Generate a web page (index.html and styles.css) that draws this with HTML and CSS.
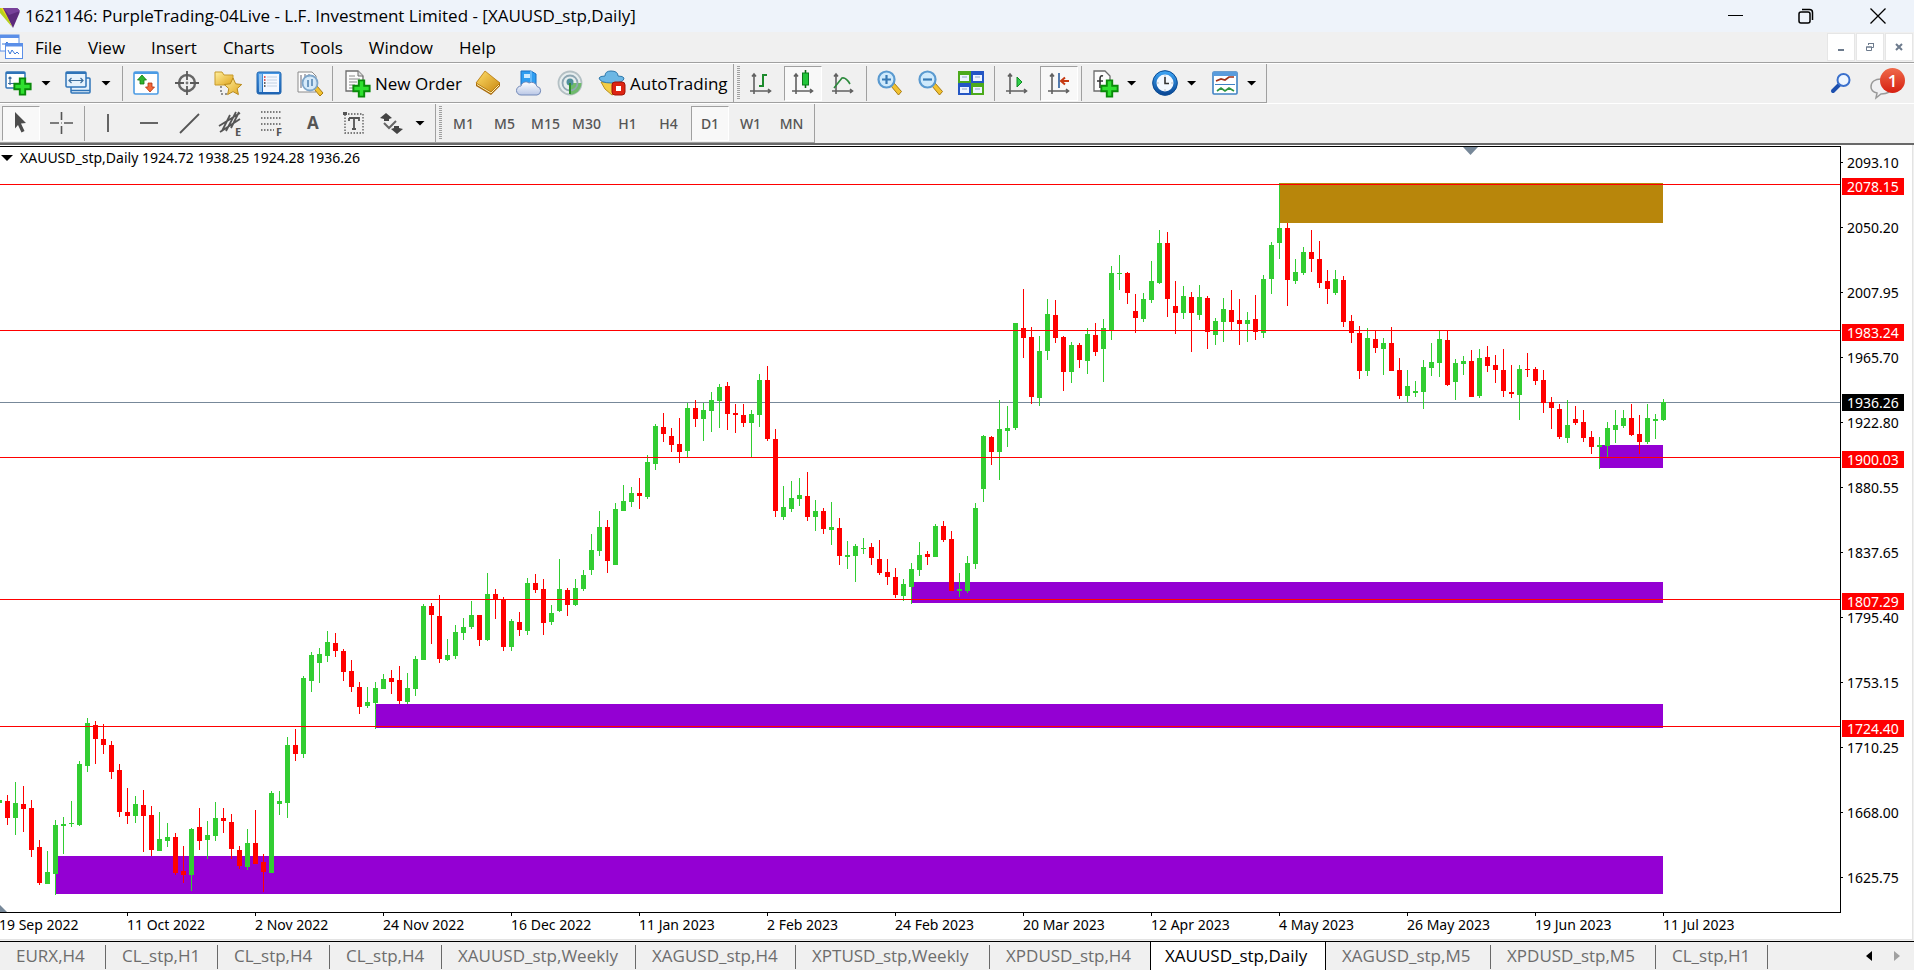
FILE: index.html
```html
<!DOCTYPE html>
<html lang="en">
<head>
<meta charset="utf-8">
<title>1621146: PurpleTrading-04Live - L.F. Investment Limited - [XAUUSD_stp,Daily]</title>
<link rel="stylesheet" href="styles.css">
</head>
<body>
<svg class="defs" aria-hidden="true">
  <defs>
    <linearGradient id="gBlue" x1="0" y1="0" x2="0" y2="1"><stop offset="0" stop-color="#4a9be8"/><stop offset="1" stop-color="#1c62b4"/></linearGradient>
    <linearGradient id="gRing" x1="0" y1="0" x2="0" y2="1"><stop offset="0" stop-color="#3aa0f0"/><stop offset="1" stop-color="#0b4a98"/></linearGradient>
    <linearGradient id="gGold" x1="0" y1="0" x2="1" y2="1"><stop offset="0" stop-color="#fff0a0"/><stop offset="1" stop-color="#e0a51c"/></linearGradient>
    <linearGradient id="gBar" x1="0" y1="0" x2="1" y2="1"><stop offset="0" stop-color="#ffdf6a"/><stop offset="1" stop-color="#c98710"/></linearGradient>
    <linearGradient id="gCloud" x1="0" y1="0" x2="0" y2="1"><stop offset="0" stop-color="#ffffff"/><stop offset="1" stop-color="#b9c7e6"/></linearGradient>
    <symbol id="plus" viewBox="0 0 14 14"><path d="M5 1h4v4h4v4H9v4H5V9H1V5h4z" fill="#2fe02f" stroke="#0a8a0a" stroke-width="1.4"/></symbol>
    <symbol id="axes" viewBox="0 0 26 26"><path d="M6 24V4M2 21h20M4 6.500 6 4l2 2.500M20 19l2.500 2-2.500 2" fill="none" stroke="#606060" stroke-width="1.600"/></symbol>
    <symbol id="lens" viewBox="0 0 26 26"><path d="M15 16l3-3 7.500 8.500-3 3.500z" fill="#f2c230" stroke="#a87a10"/><circle cx="10.500" cy="9.500" r="8" fill="#cfeafc" stroke="#5a9ad0" stroke-width="2.200"/></symbol>
  </defs>
</svg>

<header class="titlebar">
  <svg class="logo" viewBox="0 0 20 24" aria-hidden="true"><path d="M0 4h4l8 19L0 9z" fill="#b6d21c"/><path d="M1 4h3l9 19z" fill="#f0d820"/><path d="M3 4h14q4 2 2 6l-6 14z" fill="#5c2a7c"/><path d="M3 4h14l3 3-11 4z" fill="#77409a"/></svg>
  <h1 class="title">1621146: PurpleTrading-04Live - L.F. Investment Limited - [XAUUSD_stp,Daily]</h1>
  <div class="wincontrols">
    <button class="winbtn" aria-label="Minimize"><svg width="16" height="16"><path d="M0 7.500h15" stroke="#000"/></svg></button>
    <button class="winbtn" aria-label="Restore"><svg width="16" height="16" fill="none" stroke="#000" stroke-width="1.500"><rect x="1" y="4" width="11" height="11" rx="2"/><path d="M4 1.500h7.500q3 0 3 3V12"/></svg></button>
    <button class="winbtn" aria-label="Close"><svg width="16" height="16"><path d="M.5.5l15 15M15.500.5l-15 15" stroke="#000" stroke-width="1.300"/></svg></button>
  </div>
</header>

<nav class="menubar">
  <svg class="menulogo" viewBox="0 0 24 26" aria-hidden="true"><rect x="0" y="1" width="19" height="16" fill="#fff" stroke="#5b8fe8"/><path d="M0 2.500h19" stroke="#5b8fe8" stroke-width="3"/><path d="M2 10h3l2-2 3 4 3-2" fill="none" stroke="#3a78d8"/><rect x="5.500" y="9.500" width="17" height="15" fill="#fff" stroke="#5b8fe8"/><path d="M5 11h18" stroke="#5b8fe8" stroke-width="3"/><path d="M8 16l2 4 2-4 3 4 2-2 2 2" fill="none" stroke="#3a78d8"/></svg>
  <button>File</button><button>View</button><button>Insert</button><button>Charts</button><button>Tools</button><button>Window</button><button>Help</button>
  <div class="mdi">
    <button class="mdibtn" aria-label="Minimize chart"><svg width="10" height="10"><path d="M2 7h6v2H2z" fill="#6d7b8d"/></svg></button>
    <button class="mdibtn" aria-label="Restore chart"><svg width="10" height="10" fill="none" stroke="#6d7b8d"><path d="M3.500 3V1.500h5v4H7M3 1.500h6" /><path d="M1.500 5h5v3.500h-5zM1 5h6"/></svg></button>
    <button class="mdibtn" aria-label="Close chart"><svg width="10" height="10"><path d="M2 2l6 6M8 2 2 8" stroke="#6d7b8d" stroke-width="2"/></svg></button>
  </div>
</nav>

<section class="tools">
  <div class="row">
    <div class="bar bar-main">
      <button class="split" aria-label="New chart"><svg class="ico" viewBox="0 0 26 26"><rect x="1" y="2" width="19" height="16" rx="1" fill="#fff" stroke="#2f74b8" stroke-width="1.500"/><path d="M1 3h19" stroke="#2f74b8" stroke-width="2"/><path d="M5 7v8M3.500 8.500 5 7l1.500 1.500M3 13.500h7" fill="none" stroke="#3d6e9c" stroke-width="1.200"/><use href="#plus" x="8" y="7" width="19" height="19"/></svg><i class="caret"></i></button>
      <button class="split" aria-label="Profiles"><svg class="ico" viewBox="0 0 26 26"><rect x="6" y="8" width="19" height="15" rx="1" fill="#e6f2fc" stroke="#2f74b8" stroke-width="1.500"/><path d="M6 20.500h19" stroke="#2f74b8" stroke-width="1.500"/><rect x="1" y="2" width="20" height="15" rx="1" fill="#e6f2fc" stroke="#2f74b8" stroke-width="1.500"/><path d="M1 3h20" stroke="#2f74b8" stroke-width="2"/><path d="M4 10.500h14M6.500 8 4 10.500 6.500 13M15.500 8l2.500 2.500-2.500 2.500" fill="none" stroke="#3d6e9c" stroke-width="1.200"/></svg><i class="caret"></i></button>
      <span class="sep"></span>
      <button class="cell" aria-label="Market watch"><svg class="ico" viewBox="0 0 26 26"><rect x="1" y="2" width="24" height="22" rx="1.500" fill="#fff" stroke="#4b9be4" stroke-width="1.600"/><path d="M1 3h24" stroke="#4b9be4" stroke-width="2"/><path d="M9 5l4.500 5H11v4H7v-4H4.500z" fill="#2fb52f" stroke="#147a14" stroke-width=".8"/><path d="M17 22l4.500-5H19v-4h-4v4h-2.500z" fill="#f4683a" stroke="#b03410" stroke-width=".8"/></svg></button>
      <button class="cell" aria-label="Data window"><svg class="ico" viewBox="0 0 26 26"><circle cx="13" cy="13" r="8" fill="none" stroke="#666" stroke-width="2.400"/><path d="M13 1v9M13 16v9M1 13h9M16 13h9" stroke="#5a5a5a" stroke-width="1.800"/><circle cx="13" cy="13" r="1.400" fill="#777"/></svg></button>
      <button class="cell" aria-label="Navigator"><svg class="ico" viewBox="0 0 26 26"><path d="M0 2h7l2 3h9v10H0z" fill="url(#gGold)" stroke="#c79a2a"/><path d="M6 16v8h6" fill="none" stroke="#333" stroke-dasharray="2 2"/><path d="M18 8l2.700 5.800 6 .7-4.500 4.100 1.200 6L18 21.600l-5.400 3 1.200-6-4.500-4.100 6-.7z" fill="url(#gGold)" stroke="#b98a1c"/></svg></button>
      <button class="cell" aria-label="Terminal"><svg class="ico" viewBox="0 0 26 26"><rect x="1" y="2" width="24" height="22" rx="2" fill="url(#gBlue)" stroke="#1e64ae"/><path d="M7 4h16v18H7z" fill="#f4f8ff"/><path d="M11 7h10M11 10h10M11 13h10M11 16h10" stroke="#b6c6dc" stroke-width=".8"/><path d="M3 4h3v18H3z" fill="#8fc2ee"/><path d="M8 7h1.500M8 10h1.500" stroke="#d22" stroke-width="1.500"/><path d="M8 13h1.500M8 16h1.500" stroke="#333" stroke-width="1.500"/></svg></button>
      <button class="cell" aria-label="Strategy tester"><svg class="ico" viewBox="0 0 26 26"><path d="M1 2h14l4 4v16H1z" fill="#fdfdfd" stroke="#8a8a8a"/><path d="M4 5v13M8 4v4M12 4v4" stroke="#667"/><path d="M17 19l3-3 6 7-3 3z" fill="#f2c230" stroke="#a87a10"/><circle cx="13" cy="13" r="7.500" fill="#d2e8fa" fill-opacity=".9" stroke="#7ea6ca" stroke-width="1.800"/><path d="M11 10v7M15 9v7" stroke="#4d80b0" stroke-width="1.500"/></svg></button>
      <span class="sep"></span>
      <button class="wide"><svg class="ico" viewBox="0 0 26 26"><path d="M2 1h12l5 5v15H2z" fill="#fcfcfc" stroke="#6c6c6c" stroke-width="1.300"/><path d="M14 1v5h5" fill="#ddd" stroke="#6c6c6c"/><path d="M5 6h6M5 9h11M5 12h8M5 15h6M5 18h5" stroke="#888"/><use href="#plus" x="8" y="9" width="19" height="19"/></svg>New Order</button>
      <button class="cell" aria-label="MetaEditor"><svg class="ico" viewBox="0 0 26 26"><path d="M10 2 25 13v3l-9 9L1 16v-3z" fill="#a8690c"/><path d="M10 1 25 13l-9 9L1 13z" fill="url(#gBar)" stroke="#b57a12" stroke-width=".8"/><path d="M2 14.500l14 8.500 8-8" fill="none" stroke="#fff2b0"/></svg></button>
      <button class="cell" aria-label="Cloud"><svg class="ico" viewBox="0 0 26 26"><path d="M5 1h10l5 3v11H5z" fill="#2f9df0" stroke="#1a70c4"/><path d="M8 4h6v4H8z" fill="#cdeaff"/><path d="M15 1v14" stroke="#9ad4ff"/><path d="M5 25a4.500 4.500 0 0 1 0-9 5 5 0 0 1 8-3 5.500 5.500 0 0 1 8 3.500 4.300 4.300 0 0 1 0 8.500z" fill="url(#gCloud)" stroke="#7289b8"/></svg></button>
      <button class="cell" aria-label="Signals"><svg class="ico" viewBox="0 0 26 26"><circle cx="13" cy="13" r="11.500" fill="#e6edee" stroke="#b4c0c4" stroke-width="1.800"/><path d="M13 13h11.500A11.500 11.500 0 0 1 13 24.500z" fill="#6fba6c"/><circle cx="13" cy="13" r="7.500" fill="none" stroke="#8ea6b2" stroke-width="1.800"/><circle cx="13" cy="12" r="3.500" fill="#4f8f9c"/><path d="M13 13v11" stroke="#2f8f2f" stroke-width="2"/></svg></button>
      <button class="wide"><svg class="ico" viewBox="0 0 26 26"><path d="M2 12h21l-5 10-5 3-7-6z" fill="#f3cd45" stroke="#b8901c"/><path d="M0 8q1-2 6-2 0-5 6-5 7 0 7 5 5 0 6 2 0 5-12 5T0 8z" fill="#6cb7e4" stroke="#2f79ac"/><rect x="13" y="12" width="13" height="13" rx="3" fill="#dd2412" stroke="#a01206"/><rect x="17" y="16" width="5" height="5" fill="#fff"/></svg>AutoTrading</button>
    </div>
    <div class="bar bar-charts">
      <span class="grip"></span>
      <button class="cell" aria-label="Bar chart"><svg class="ico" viewBox="0 0 26 26"><use href="#axes"/><path d="M15 4v13M15 5h4M11 16h4" fill="none" stroke="#1c8a2c" stroke-width="2"/></svg></button>
      <button class="cell on" aria-label="Candlesticks"><svg class="ico" viewBox="0 0 26 26"><use href="#axes"/><path d="M15.500 0v18" stroke="#0a6a14" stroke-width="1.600"/><rect x="12.500" y="3" width="6" height="12" fill="#22c63a" stroke="#0a7a1a"/></svg></button>
      <button class="cell" aria-label="Line chart"><svg class="ico" viewBox="0 0 26 26"><use href="#axes"/><path d="M4 18q4-5 8-10 4-1 8 6" fill="none" stroke="#2c8a3c" stroke-width="1.600"/></svg></button>
      <span class="sep"></span>
      <button class="cell" aria-label="Zoom in"><svg class="ico" viewBox="0 0 26 26"><use href="#lens"/><path d="M6 9.500h9M10.500 5v9" stroke="#3779b4" stroke-width="2.200"/></svg></button>
      <button class="cell" aria-label="Zoom out"><svg class="ico" viewBox="0 0 26 26"><use href="#lens"/><path d="M6 9.500h9" stroke="#3779b4" stroke-width="2.200"/></svg></button>
      <button class="cell" aria-label="Tile windows"><svg class="ico" viewBox="0 0 26 26"><path d="M0 1h13v12H0zM13 13h13v12H13z" fill="#4caa1c"/><path d="M13 1h13v12H13zM0 13h13v12H0z" fill="#2456c4"/><path d="M2 5h9v6H2zM15 5h9v6h-9zM2 17h9v6H2zM15 17h9v6h-9z" fill="#eef4ff"/><path d="M4 7h5M17 7h5M4 19h5M17 19h5" stroke="#8fa8c8"/></svg></button>
      <span class="sep"></span>
      <button class="cell" aria-label="Auto scroll"><svg class="ico" viewBox="0 0 26 26"><use href="#axes"/><path d="M13 7l5 5-5 5z" fill="#2fd04a" stroke="#0f8a22"/></svg></button>
      <button class="cell on" aria-label="Chart shift"><svg class="ico" viewBox="0 0 26 26"><use href="#axes"/><path d="M13 3v15" stroke="#2a5c9c" stroke-width="1.600"/><path d="M23 11h-7M19 7.500 15 11l4 3.500" fill="none" stroke="#c63a12" stroke-width="2"/></svg></button>
      <span class="sep"></span>
      <button class="split" aria-label="Indicators"><svg class="ico" viewBox="0 0 26 26"><path d="M2 1h11l5 5v15H2z" fill="#fcfcfc" stroke="#6c6c6c" stroke-width="1.300"/><path d="M11 6q-3-1-3 3v9M5 11h6" fill="none" stroke="#333" stroke-width="1.600"/><use href="#plus" x="8" y="9" width="19" height="19"/></svg><i class="caret"></i></button>
      <button class="split" aria-label="Periods"><svg class="ico" viewBox="0 0 26 26"><circle cx="13" cy="13" r="10.500" fill="#f2f8ff" stroke="url(#gRing)" stroke-width="4"/><circle cx="13" cy="13" r="12.300" fill="none" stroke="#0c4c94"/><path d="M13 7v6.500h4" fill="none" stroke="#333" stroke-width="1.600"/><path d="M13 5.500v1M13 19.500v1M5.500 13h1M19.500 13h1" stroke="#888"/></svg><i class="caret"></i></button>
      <button class="split" aria-label="Templates"><svg class="ico" viewBox="0 0 26 26"><rect x="1" y="2" width="24" height="22" rx="1" fill="#fff" stroke="#3f82c4" stroke-width="1.600"/><path d="M1 4h24" stroke="#5a9cdc" stroke-width="4"/><path d="M3 14.500h20" stroke="#3f82c4"/><path d="M4 11l5-2 4 1 4-3h5" fill="none" stroke="#a03018" stroke-width="1.700"/><path d="M5 21l4-3 4 3 4-3 5 3" fill="none" stroke="#2c9440" stroke-width="1.700"/></svg><i class="caret"></i></button>
    </div>
    <div class="right">
      <button class="plain" aria-label="Search"><svg width="22" height="24" viewBox="0 0 22 24"><path d="M3 19l6-6" stroke="#1c4fae" stroke-width="4" stroke-linecap="round"/><circle cx="13.500" cy="8" r="6" fill="#eef6ff" stroke="#3a70cc" stroke-width="2"/></svg></button>
      <button class="plain note" aria-label="Notifications"><svg width="28" height="28" viewBox="0 0 28 28"><path d="M11 7c6 0 10 3 10 8s-4 7-10 7l-5 4 1-5c-4-1-6-3-6-6 0-5 4-8 10-8z" fill="#f0f0f2" stroke="#999" stroke-width="1.500"/></svg><span class="badge">1</span></button>
    </div>
  </div>
  <div class="row">
    <div class="bar bar-line">
      <button class="cell on" aria-label="Cursor"><svg class="ico" viewBox="0 0 26 26"><path d="M7 2l11 11-5 .5 3.500 7.500-3 1.500L10 15l-3 3.500z" fill="#4c4c4c"/></svg></button>
      <button class="cell" aria-label="Crosshair"><svg class="ico" viewBox="0 0 26 26"><path d="M12.500 2v8M12.500 16v8M1 13h9M15 13h9" stroke="#555" stroke-width="1.600"/><path d="M12 12.500h1v1h-1z" fill="#555"/></svg></button>
      <span class="sep"></span>
      <button class="cell" aria-label="Vertical line"><svg class="ico" viewBox="0 0 26 26"><path d="M13 4v18" stroke="#555" stroke-width="1.800"/></svg></button>
      <button class="cell" aria-label="Horizontal line"><svg class="ico" viewBox="0 0 26 26"><path d="M4 13h18" stroke="#555" stroke-width="1.800"/></svg></button>
      <button class="cell" aria-label="Trendline"><svg class="ico" viewBox="0 0 26 26"><path d="M3 23 22 4" stroke="#555" stroke-width="1.800"/></svg></button>
      <button class="cell" aria-label="Equidistant channel"><svg class="ico" viewBox="0 0 26 26"><path d="M1 16 22 3M2 22 22 9M4 21 12 5M8 21l10-19M13 18l8-16" stroke="#555" stroke-width="1.800"/><text x="17" y="26" class="icotxt">E</text></svg></button>
      <button class="cell" aria-label="Fibonacci"><svg class="ico" viewBox="0 0 26 26"><path d="M2 2h21M2 8h21M2 14h21M2 20h13" stroke="#555" stroke-width="1.600" stroke-dasharray="1.500 1.500"/><text x="17" y="26" class="icotxt">F</text></svg></button>
      <button class="cell" aria-label="Text"><svg class="ico" viewBox="0 0 26 26"><text x="7" y="19" class="icotxt big">A</text></svg></button>
      <button class="cell" aria-label="Text label"><svg class="ico" viewBox="0 0 26 26"><rect x="4" y="4" width="18" height="19" fill="none" stroke="#555" stroke-width="1.300" stroke-dasharray="1.500 1.500"/><path d="M2 2h4v3H2z" fill="#555"/><path d="M8 8h10v3M8 11V8M13 8v11M11 19h4" fill="none" stroke="#555" stroke-width="1.800"/></svg></button>
      <button class="split" aria-label="Arrows"><svg class="ico" viewBox="0 0 26 26"><path d="M7 3l6 5-3 1v2H5V9L1 8z" fill="#444"/><path d="M5 13l5 5 7-7" fill="none" stroke="#666" stroke-width="2"/><path d="M18 24l-6-5 3-1v-2h5v2l4 1z" fill="#444"/></svg><i class="caret"></i></button>
    </div>
    <div class="bar bar-time">
      <span class="grip"></span>
      <button class="cell tf">M1</button><button class="cell tf">M5</button><button class="cell tf">M15</button><button class="cell tf">M30</button><button class="cell tf">H1</button><button class="cell tf">H4</button><button class="cell tf on">D1</button><button class="cell tf">W1</button><button class="cell tf">MN</button>
    </div>
  </div>
</section>

<main class="chart">
  <div class="plot">
    <svg class="plotsvg" role="img" aria-label="XAUUSD daily candlestick chart"><g id="plot" transform="translate(0 -147)"></g></svg>
    <div class="info"><i class="caret"></i><span>XAUUSD_stp,Daily 1924.72 1938.25 1924.28 1936.26</span></div>
    <i class="shiftmark"></i>
    <i class="cornermark"></i>
  </div>
  <svg class="prices"><g id="prices" transform="translate(0 -146)"></g></svg>
  <svg class="dates"><g id="dates"></g></svg>
</main>

<footer class="tabs">
  <button class="tab first">EURX,H4</button><button class="tab">CL_stp,H1</button><button class="tab">CL_stp,H4</button><button class="tab">CL_stp,H4</button><button class="tab xl">XAUUSD_stp,Weekly</button><button class="tab md">XAGUSD_stp,H4</button><button class="tab xl">XPTUSD_stp,Weekly</button><button class="tab md edge">XPDUSD_stp,H4</button><button class="tab xm active">XAUUSD_stp,Daily</button><button class="tab lg">XAGUSD_stp,M5</button><button class="tab lg">XPDUSD_stp,M5</button><button class="tab">CL_stp,H1</button>
  <div class="scrollers">
    <button class="plain" aria-label="Scroll left"><svg width="6" height="10"><path d="M6 0v10L0 5z" fill="#000"/></svg></button>
    <button class="plain" aria-label="Scroll right"><svg width="6" height="10"><path d="M0 0v10l6-5z" fill="#a0a0a0"/></svg></button>
  </div>
</footer>
<script src="chart.js"></script>
</body>
</html>
```
FILE: styles.css
```css
* { box-sizing: border-box; }
html, body { height: 100%; }
body {
  margin: 0;
  display: flex;
  flex-direction: column;
  overflow: hidden;
  background: #f0f0f0;
  color: #000;
  font-family: "Open Sans", "Noto Sans", sans-serif;
  font-size: 17px;
}
button {
  margin: 0;
  padding: 0;
  border: 0;
  background: none;
  color: inherit;
  font: inherit;
  white-space: nowrap;
}
svg { display: block; }
.defs { position: absolute; width: 0; height: 0; }

.titlebar { display: flex; align-items: center; gap: 5px; height: 32px; background: #eef3fa; }
.logo { width: 20px; height: 24px; flex: none; }
.title { margin: 0; flex: 1; font-size: 17px; font-weight: 400; line-height: 32px; }
.wincontrols { display: flex; }
.winbtn { display: flex; width: 70px; height: 28px; align-items: center; justify-content: center; }
.winbtn:last-child { width: 73px; }

.menubar { display: flex; align-items: center; gap: 26px; height: 31px; border-bottom: 1px solid #a0a0a0; }
.menulogo { width: 24px; height: 26px; margin-right: -15px; flex: none; }
.mdi { display: flex; gap: 3px; margin-left: auto; margin-right: 2px; }
.mdibtn { display: flex; width: 26px; height: 26px; align-items: center; justify-content: center; background: #fff; outline: 1px solid #e6e6e6; }

.tools { border-bottom: 2px solid #696969; }
.row { display: flex; height: 40px; border-top: 1px solid #fff; }
.bar { display: flex; align-items: center; border-right: 1px solid #a0a0a0; border-bottom: 1px solid #a0a0a0; flex: none; }
.bar-charts { padding-right: 2px; }
.bar-line { padding-right: 1px; }
.bar-time { padding-right: 2px; }
.cell { display: flex; width: 41px; height: 35px; align-items: center; justify-content: center; flex: none; }
.cell.on { width: 38px; margin: 0 1px 0 2px; border: 1px solid; border-color: #a0a0a0 #fff #fff #a0a0a0; background: #f8f8f8; }
.tf { color: #555; font-family: "Noto Sans", sans-serif; font-size: 14px; font-weight: 500; }
.split { display: flex; width: 60px; height: 35px; align-items: center; gap: 10px; padding-left: 5px; flex: none; }
.bar-charts .split { padding-left: 8px; gap: 9px; }
.wide { display: flex; height: 35px; align-items: center; gap: 5px; padding: 0 5px 0 9px; }
.ico { width: 26px; height: 26px; flex: none; overflow: visible; }
.icotxt { font: 700 11px "Open Sans", sans-serif; fill: #555; }
.icotxt.big { font-size: 17px; }
.caret { display: block; width: 10px; height: 5px; background: #000; clip-path: polygon(0 0, 100% 0, 50% 100%); }
.sep { width: 1px; height: 35px; margin: 0 2px; background: #a0a0a0; }
.grip { width: 3px; height: 34px; margin: 0 1px 0 3px; background: repeating-linear-gradient(#a0a0a0 0 1px, #f0f0f0 1px 2px); }
.right { display: flex; align-items: center; gap: 18px; margin-left: auto; padding-right: 9px; }
.note { position: relative; padding-top: 4px; padding-right: 7px; }
.badge { position: absolute; top: 0; right: 0; width: 25px; height: 25px; border-radius: 50%; background: linear-gradient(#ef6a4a, #d61f10); color: #fff; font-size: 17px; font-weight: 600; line-height: 25px; text-align: center; }

.chart {
  flex: 1;
  min-height: 0;
  display: grid;
  grid-template-columns: 1fr 71px;
  grid-template-rows: 1fr 26px;
  padding-top: 1px;
  margin-right: 1px;
  border-right: 1px solid #e3e3e3;
  border-bottom: 1px solid #e3e3e3;
  background: #fff;
}
.plot { position: relative; overflow: hidden; border: solid #000; border-width: 1px 1px 1px 0; }
.plotsvg { width: 100%; height: 100%; }
.prices { width: 100%; height: 100%; overflow: visible; }
.dates { grid-column: 1 / 3; width: 100%; height: 26px; }
.chart text, .info { font-family: "Noto Sans", sans-serif; font-size: 14px; }
.info { position: absolute; top: 1px; left: 1px; display: flex; align-items: center; gap: 7px; line-height: 20px; }
.info .caret { width: 12px; height: 6px; }
.shiftmark { position: absolute; top: 0; left: 1463px; width: 15px; height: 8px; background: #778899; clip-path: polygon(0 0, 100% 0, 50% 100%); }
.cornermark { position: absolute; bottom: 0; left: 0; width: 7px; height: 7px; background: #778899; clip-path: polygon(0 0, 100% 100%, 0 100%); }

.tabs { display: flex; height: 29px; margin-top: 1px; border-top: 1px solid #000; color: #6d6d6d; }
.tab { position: relative; width: 112px; padding-left: 16px; flex: none; line-height: 28px; text-align: left; }
.tab::after { content: ""; position: absolute; right: 0; top: 3px; bottom: 1px; width: 1px; background: #696969; }
.tab.first { width: 106px; }
.tab.md { width: 160px; }
.tab.lg { width: 165px; }
.tab.xm { width: 176px; }
.tab.xl { width: 194px; }
.tab.edge::after, .tab.active::after { display: none; }
.tab.active { padding-left: 14px; background: #fff; color: #000; border: solid #000; border-width: 0 1px; }
.scrollers { display: flex; align-items: center; gap: 22px; margin-left: auto; padding-right: 14px; }
```
FILE: chart.js
```js
// Each candle: direction, high, body top, body bottom, low. Spacing is 8px.
const candles = `
R795,801,818,825 G782,803,818,835 R786,804,809,832 R800,808,850,857 R840,847,883,885 G851,872,884,884
G820,825,874,895 G817,824,826,854 G801,823,824,827 G761,764,825,826 G718,723,766,772 R721,725,739,764
R724,739,745,754 R741,745,772,779 R764,770,812,817 R788,812,816,824 G796,804,816,823 R790,805,816,852
R806,815,850,856 G812,839,851,851 G823,837,841,847 R833,837,873,875 R846,871,875,883 G828,829,875,891
R808,827,841,850 G821,835,840,859 G802,818,836,841 R808,818,821,833 R814,822,849,859 R846,850,866,869
G829,843,867,870 R810,843,864,864 R854,862,872,892 G791,793,873,873 G791,801,804,815 G737,745,803,818
R729,745,754,761 G676,678,754,758 G652,655,681,692 G648,654,663,683 G631,642,656,662 R633,643,651,657
R649,651,672,681 R660,671,687,692 R682,687,707,714 G687,702,706,708 G682,688,703,729 G674,679,689,689
R670,678,682,694 R666,680,701,704 G673,688,702,704 G656,659,689,696 G604,606,660,660 R603,606,615,644
R595,616,659,663 G639,655,660,661 G625,632,656,659 G618,627,633,640 G601,615,627,629
R615,615,640,646 G573,594,640,641 R589,594,599,619 R597,600,647,651 G619,621,647,651 R612,622,630,636
G578,583,631,635 R574,583,590,593 R579,589,623,635 G605,613,622,625 G559,589,611,612 R588,590,605,616
G579,588,605,606 G570,575,589,591 G534,550,570,575 G511,527,551,556 R520,527,561,573 G503,509,565,565
G485,501,511,511 G487,493,502,507 R478,493,496,509 G455,462,497,499 G424,426,464,470 R413,427,434,442
R428,436,445,452 R418,444,452,463 G403,408,451,457 R400,408,419,427 G403,410,419,441 G392,400,411,432
G384,387,401,428 R382,386,414,430 R404,413,415,433 R404,415,423,427 G410,414,423,457 G374,380,415,427
R366,380,439,441 R429,439,511,517 G486,507,517,520 G481,498,509,512 G478,495,499,506 R472,496,517,521
G500,511,517,531 R508,511,529,534 G502,527,530,545 R518,528,556,565 G541,555,557,569 G544,546,556,582
G538,548,549,554 R543,547,558,565 R540,559,573,575 R559,572,577,585 R568,577,595,598 G579,584,596,601
G563,569,587,604 G542,555,570,576 R551,554,557,565 G524,526,557,557 R521,526,540,542 R531,539,591,591
G573,589,591,597 G556,563,591,593 G503,508,564,569 G435,436,489,502 R436,437,452,465 G400,429,452,480
G406,428,431,447 G323,323,428,430 R289,328,338,358 R327,337,397,404 G336,351,398,406 G299,314,351,360
R300,315,338,343 R336,337,372,391 G342,345,372,383 R343,345,360,368 G328,334,361,374 R323,335,352,356
G319,328,349,382 G266,273,330,340 G255,273,274,290 R272,273,293,304 R294,311,318,333 G293,299,319,322
G261,281,300,303 G230,243,283,284 R232,243,299,317 R281,306,313,334 G286,296,313,319 R292,297,313,352
G285,297,315,320 R296,298,332,349 G318,321,335,345 G298,309,322,342 R290,310,322,330 R299,320,324,345
G312,320,324,342 R295,319,332,340 G275,279,333,338 G242,245,279,294 G183,228,243,259 R223,228,280,306
G259,272,281,284 G247,252,273,275 R230,252,259,272 R241,259,283,288 R270,281,289,304 G270,279,293,295
R276,280,322,327 R315,321,333,343 R326,333,371,379 G328,338,371,376 R331,339,348,353 G338,343,349,375
R327,343,371,371 R358,370,396,399 G370,386,396,402 G381,391,393,397 G360,367,392,409 G343,362,368,376
G331,339,363,377 R331,340,385,386 G359,363,382,400 G356,361,364,375 R350,361,397,397 G349,358,396,398
R346,357,366,372 R355,365,370,383 R349,370,391,397 R365,392,394,398 G365,369,395,420 R353,369,370,377
R367,369,381,385 R370,380,403,413 R397,402,408,429 R404,409,437,439 G400,425,438,443 R406,419,423,425
R410,422,438,442 R431,437,447,454 G437,445,447,469 G422,428,446,457 G410,425,430,443 G410,418,426,428
R404,418,435,436 R415,434,442,454 G404,418,442,444 G414,419,421,439 G399,402,420,421`.trim().split(/\s+/);

const SVG = "http://www.w3.org/2000/svg";
function add(parent, name, attrs, text) {
  const el = document.createElementNS(SVG, name);
  for (const key in attrs) el.setAttribute(key, attrs[key]);
  if (text) el.textContent = text;
  parent.appendChild(el);
}
function box(parent, x, y, width, height, fill) {
  add(parent, "rect", { x, y, width, height, fill });
}

const plot = document.getElementById("plot");
box(plot, 0, 402, "100%", 1, "#778899");
box(plot, 1279, 183, 384, 40, "#b8860b");
box(plot, 1600, 445, 63, 23, "#9400d3");
box(plot, 912, 582, 751, 21, "#9400d3");
box(plot, 376, 704, 1287, 24, "#9400d3");
box(plot, 56, 856, 1607, 38, "#9400d3");
box(plot, 0, 800, 2, 3, "#32cd32");

candles.forEach((c, i) => {
  const fill = c[0] === "R" ? "#ff0000" : "#32cd32";
  const [high, top, bottom, low] = c.slice(1).split(",").map(Number);
  const x = 7 + 8 * i;
  box(plot, x, high, 1, low - high, fill);
  box(plot, x - 2, top, 5, bottom - top, fill);
});
[184, 330, 457, 599, 726].forEach(y => box(plot, 0, y, "100%", 1, "#ff0000"));

const prices = document.getElementById("prices");
["2093.10", "2050.20", "2007.95", "1965.70", "1922.80", "1880.55", "1837.65", "1795.40", "1753.15", "1710.25", "1668.00", "1625.75"]
  .forEach((label, i) => {
    const y = 162 + 65 * i;
    box(prices, 0, y, 2, 1, "#000");
    add(prices, "text", { x: 6, y: y + 6 }, label);
  });
[["2078.15", 184], ["1983.24", 330], ["1936.26", 400], ["1900.03", 457], ["1807.29", 599], ["1724.40", 726]]
  .forEach(([label, y]) => {
    box(prices, 1, y - 6, 62, 17, label === "1936.26" ? "#000" : "#ff0000");
    add(prices, "text", { x: 6, y: y + 8, fill: "#fff" }, label);
  });

const dates = document.getElementById("dates");
["19 Sep 2022", "11 Oct 2022", "2 Nov 2022", "24 Nov 2022", "16 Dec 2022", "11 Jan 2023", "2 Feb 2023", "24 Feb 2023",
  "20 Mar 2023", "12 Apr 2023", "4 May 2023", "26 May 2023", "19 Jun 2023", "11 Jul 2023"]
  .forEach((label, i) => {
    box(dates, 128 * i - 1, 0, 1, 3, "#000");
    add(dates, "text", { x: 128 * i - 1, y: 17 }, label);
  });
```
